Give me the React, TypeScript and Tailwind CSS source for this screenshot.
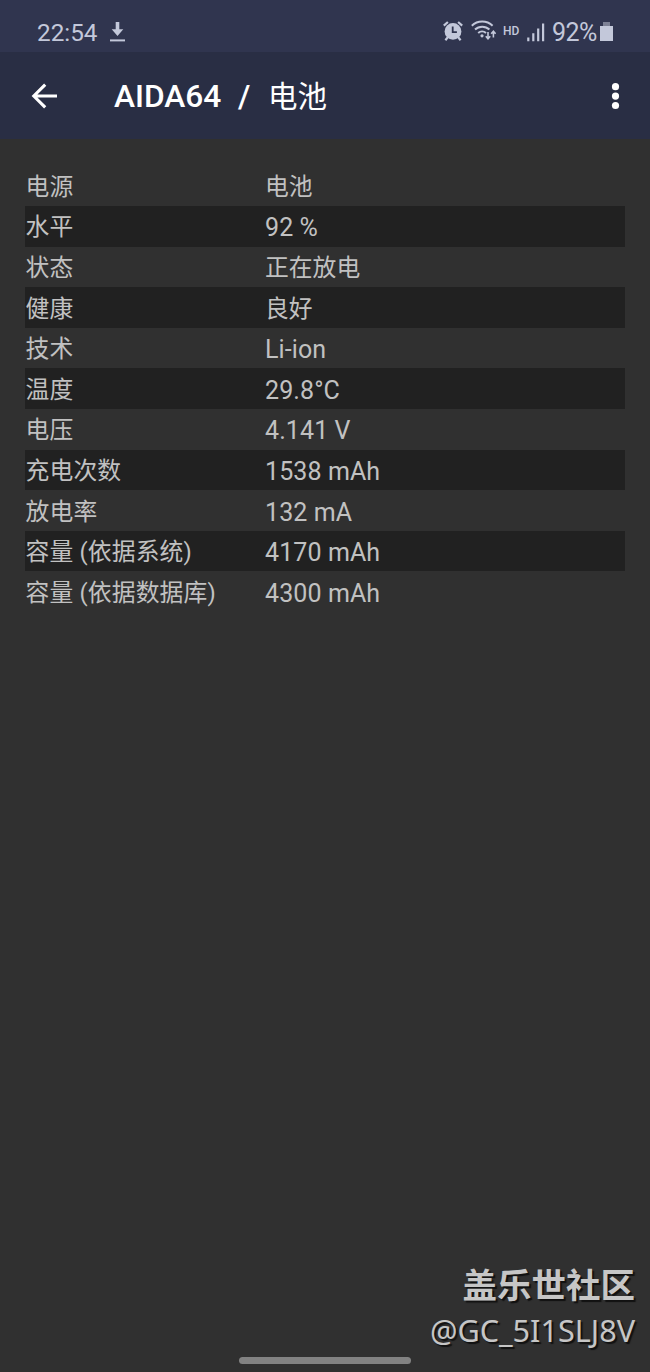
import React from "react";

interface InfoRow {
  label: string;
  value: string;
  latin?: boolean;
}

const rows: InfoRow[] = [
  { label: "电源", value: "电池" },
  { label: "水平", value: "92 %", latin: true },
  { label: "状态", value: "正在放电" },
  { label: "健康", value: "良好" },
  { label: "技术", value: "Li-ion", latin: true },
  { label: "温度", value: "29.8°C", latin: true },
  { label: "电压", value: "4.141 V", latin: true },
  { label: "充电次数", value: "1538 mAh", latin: true },
  { label: "放电率", value: "132 mA", latin: true },
  { label: "容量 (依据系统)", value: "4170 mAh", latin: true },
  { label: "容量 (依据数据库)", value: "4300 mAh", latin: true },
];

function DownloadIcon() {
  return (
    <svg width="16" height="20" viewBox="0 0 16 20" fill="currentColor">
      <path d="M5.7 0h3.6v7.2h4L7.5 14 1.7 7.2h4z" />
      <path d="M0 17.4h15v2H0z" />
    </svg>
  );
}

function AlarmIcon() {
  return (
    <svg width="20" height="20" viewBox="0 0 20 20" fill="none" stroke="currentColor">
      <circle cx="10" cy="10.4" r="8.4" fill="currentColor" stroke="none" />
      <path d="M0.8 4.6 4.9 1M19.2 4.6 15.1 1" strokeWidth="2.2" />
      <path d="m5 16-2.6 3.2M15 16l2.6 3.2" strokeWidth="2.2" />
      <path d="M9.7 5.6v5.5h4.2" stroke="#30354f" strokeWidth="1.8" />
    </svg>
  );
}

function WifiIcon() {
  return (
    <svg width="25" height="20" viewBox="0 0 25 20" fill="none" stroke="currentColor" strokeWidth="2">
      <path d="M0.8 5.8a15 15 0 0 1 20.8 0" />
      <path d="M4 9.6a10.5 10.5 0 0 1 14.4 0" />
      <path d="M7.2 12.9a5.8 5.8 0 0 1 7.8 0" />
      <circle cx="11" cy="15.8" r="1.6" fill="currentColor" stroke="none" />
      <path d="M17 12v6.8m-2.2-2.6 2.2 2.6 2.2-2.6M22.4 17.4v-6.2m-2.2 2.6 2.2-2.6 2.2 2.6" strokeWidth="1.6" />
    </svg>
  );
}

function SignalIcon() {
  return (
    <svg width="18" height="19" viewBox="0 0 18 19" fill="currentColor">
      <path d="M0.2 14.5h2.2v3.8H0.2zM5.2 10.3h2.2v8H5.2zM10.1 5.4h2.2v12.9h-2.2zM15 0.6h2.2v17.7H15z" />
    </svg>
  );
}

function StatusBar() {
  return (
    <div className="flex h-[52px] shrink-0 items-start justify-between bg-[#30354f] pt-[18px] pr-[37px] pl-[37px] text-[#c3c8da]">
      <div className="flex items-start">
        <span className="w-[73px] pt-px text-[24.3px] leading-[28px]">22:54</span>
        <div className="pt-1">
          <DownloadIcon />
        </div>
      </div>
      <div className="flex items-start">
        <div className="mr-[8px] pt-[3px]">
          <AlarmIcon />
        </div>
        <div className="mr-[7px] pt-[2px]">
          <WifiIcon />
        </div>
        <span className="mr-[7px] w-[17px] text-[12px] leading-[27px] font-medium">HD</span>
        <div className="mr-[7px] pt-[5px]">
          <SignalIcon />
        </div>
        <span className="w-[48px] pt-px text-[25px] leading-[28px] tracking-[-0.5px]">92%</span>
        <div className="flex w-[13px] flex-col items-center pt-[4px]">
          <div className="h-[4px] w-[7px] bg-[#7d8195]" />
          <div className="h-[15px] w-[13px] bg-current" />
        </div>
      </div>
    </div>
  );
}

function AppBar() {
  return (
    <div className="flex h-[87px] shrink-0 items-center justify-between bg-[#292e44] pr-[30px] pl-[31px] text-white">
      <div className="flex items-center">
        <svg width="27" height="26" viewBox="0 0 27 26" fill="none" stroke="currentColor" strokeWidth="3.1">
          <path d="M26 13H3M14.2 1.6 2.8 13l11.4 11.4" />
        </svg>
        <h1 className="ml-[56px] flex items-center pt-[3px] text-[31.7px] leading-[40px] font-medium">
          <span className="w-[124px]">AIDA64</span>
          <span className="w-[30px]">/</span>
          <span className="text-[29.5px] font-normal">电池</span>
        </h1>
      </div>
      <svg width="9" height="28" viewBox="0 0 9 28" fill="currentColor">
        <circle cx="4.5" cy="4.7" r="3.6" />
        <circle cx="4.5" cy="14.1" r="3.6" />
        <circle cx="4.5" cy="23.5" r="3.6" />
      </svg>
    </div>
  );
}

export default function App() {
  return (
    <div className="relative flex h-[1372px] w-[650px] flex-col overflow-hidden bg-[#303030] font-[Roboto,'Noto_Sans_CJK_SC',sans-serif]">
      <StatusBar />
      <AppBar />

      <div className="mt-[26.5px] mr-[25px] ml-[25px] text-[23.8px] text-[#c1c1c1]">
        {rows.map((row) => (
          <div key={row.label} className="flex h-[40.6px] items-center pt-[3px] leading-[37px] even:bg-[#212121]">
            <span className="w-[240px] pl-[0.5px] tracking-[0.15px] whitespace-nowrap">{row.label}</span>
            <span className={row.latin ? "text-[25px] tracking-[0.1px]" : ""}>{row.value}</span>
          </div>
        ))}
      </div>

      {/* Community watermark */}
      <div className="absolute right-[15px] bottom-[20px] flex flex-col items-end text-[#c6c6c6] [text-shadow:2px_2px_1px_#111]">
        <span className="text-[34.5px] leading-[44px] font-bold">盖乐世社区</span>
        <span className="font-['Noto_Sans',sans-serif] text-[30.6px] leading-[44px]">@GC_5I1SLJ8V</span>
      </div>

      {/* Gesture bar */}
      <div className="absolute bottom-[8px] left-[239px] h-[7px] w-[172px] rounded-full bg-[#828282]" />
    </div>
  );
}
